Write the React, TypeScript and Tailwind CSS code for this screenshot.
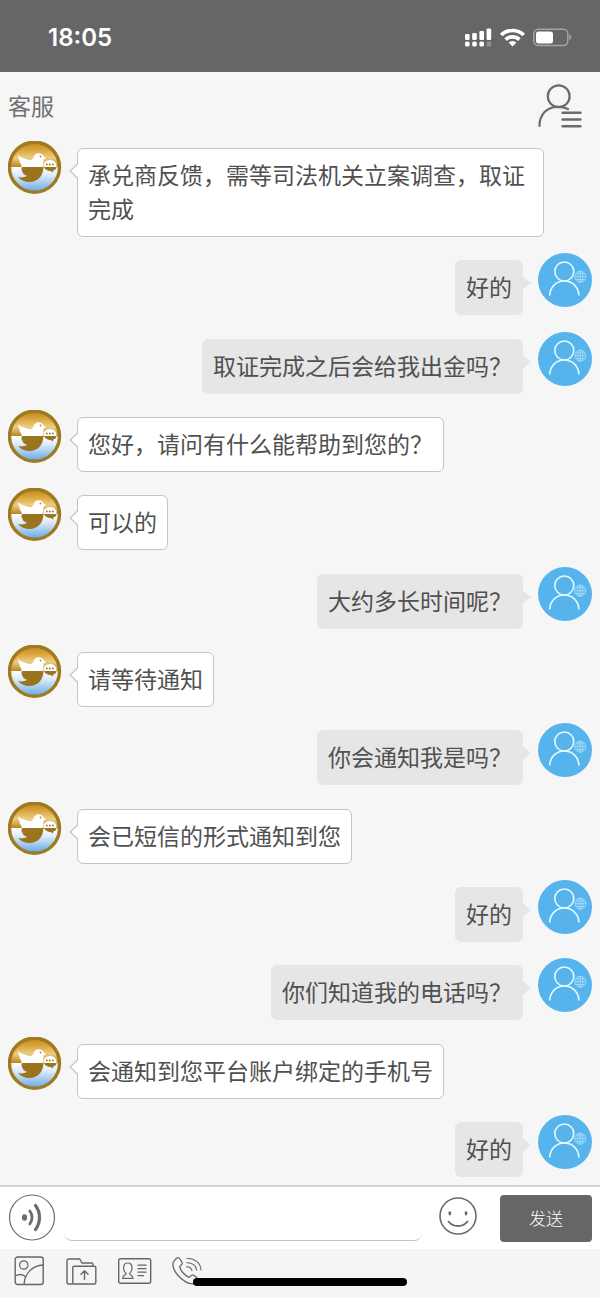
import { useState } from 'react'

type Message = { id: number; from: 'agent' | 'me'; text: string }

const messages: Message[] = [
  { id: 1, from: 'agent', text: '承兑商反馈，需等司法机关立案调查，取证完成' },
  { id: 2, from: 'me', text: '好的' },
  { id: 3, from: 'me', text: '取证完成之后会给我出金吗？' },
  { id: 4, from: 'agent', text: '您好，请问有什么能帮助到您的？' },
  { id: 5, from: 'agent', text: '可以的' },
  { id: 6, from: 'me', text: '大约多长时间呢？' },
  { id: 7, from: 'agent', text: '请等待通知' },
  { id: 8, from: 'me', text: '你会通知我是吗？' },
  { id: 9, from: 'agent', text: '会已短信的形式通知到您' },
  { id: 10, from: 'me', text: '好的' },
  { id: 11, from: 'me', text: '你们知道我的电话吗？' },
  { id: 12, from: 'agent', text: '会通知到您平台账户绑定的手机号' },
  { id: 13, from: 'me', text: '好的' },
]

function StatusBar() {
  return (
    <div className="flex h-[72px] items-center justify-between bg-[#666666] pt-1 pr-7 pl-12">
      <span className="font-[Inter] text-2xl font-semibold text-white">18:05</span>
      <svg width="108" height="20" viewBox="0 0 108 20" fill="#fff" aria-hidden="true">
        <rect x="1" y="6" width="4.6" height="6" rx="1.2" />
        <rect x="8.2" y="5" width="4.6" height="7" rx="1.2" />
        <rect x="15.4" y="3" width="4.6" height="9" rx="1.2" />
        <rect x="22.6" y="0.5" width="4.6" height="11.5" rx="1.2" />
        <rect x="1" y="13.5" width="4.6" height="5" rx="1.6" />
        <rect x="8.2" y="13.5" width="4.6" height="5" rx="1.6" />
        <rect x="15.4" y="13.5" width="4.6" height="5" rx="1.6" />
        <rect x="22.6" y="13.5" width="4.6" height="5" rx="1.6" fill="#909090" />
        <g fill="none" stroke="#fff" strokeWidth="3.6">
          <path d="M37.2 7a16.4 16.4 0 0 1 22.6 0" />
          <path d="M41.6 11.6a10 10 0 0 1 13.8 0" />
        </g>
        <path d="M48.5 18.6l-3.9-4a5.6 5.6 0 0 1 7.8 0z" />
        <rect x="69.8" y="1.2" width="34" height="16.4" rx="4.5" fill="none" stroke="#a3a3a3" strokeWidth="1.5" />
        <rect x="72" y="3.4" width="17" height="12" rx="2.6" />
        <path d="M105.4 6.6c2.4.8 2.4 4.8 0 5.6z" fill="#a3a3a3" />
      </svg>
    </div>
  )
}

function AgentAvatar() {
  return (
    <svg className="shrink-0" width="54" height="54" viewBox="0 0 54 54" role="img" aria-label="客服">
      <defs>
        <linearGradient id="gold" x1="0" y1="0" x2="0" y2="1">
          <stop offset="0" stopColor="#b8861c" />
          <stop offset="0.35" stopColor="#dba63a" />
          <stop offset="0.65" stopColor="#edcd86" />
          <stop offset="1" stopColor="#b9851c" />
        </linearGradient>
        <linearGradient id="water" x1="0" y1="0" x2="0" y2="1">
          <stop offset="0" stopColor="#ffffff" />
          <stop offset="0.3" stopColor="#dcebfa" />
          <stop offset="1" stopColor="#4d9be0" />
        </linearGradient>
        <clipPath id="disc">
          <circle cx="26.5" cy="26" r="25" />
        </clipPath>
      </defs>
      <g clipPath="url(#disc)">
        <rect width="54" height="26" fill="url(#gold)" />
        <rect y="26" width="54" height="28" fill="url(#water)" />
        {/* reflection of the bird */}
        <path
          d="M14 26h21.5c0 8.500-5.700 15-13.800 15-4.800 0-9-1.700-11.500-5 3.800.8 6.800.3 9-1.300-2.700-.6-4.400-2-4.700-4-1.200-.9-1.300-2.700-.5-4.700z"
          fill="#9b7420"
        />
        <path d="M35.8 26h13c-.5 2-2 3.300-3.800 3.600l.3 2-2.800-1.700c-3 0-6-1.500-6.700-3.900z" fill="#9b7420" />
        {/* bird */}
        <path
          d="M10.3 14.3c3.500 3.200 7.500 4.100 11.500 4.600 2 0 3.300-1 3.800-2.600.8-2.600 2.500-4 5-4 2.200 0 3.900 1 4.700 2.600l2.700 2.400-2.500 1.200c.3 3-.1 5.500-1 7.500H14.200c-.8-.8-1-1.700-.8-2.600-1.300-.8-1.900-2.100-1.700-3.700-1-1.600-1.500-3.400-1.400-5.400z"
          fill="#fff"
        />
        <circle cx="32.5" cy="15.5" r="0.9" fill="#b58322" />
        <path d="M35.5 26c-.7-4.200 2.500-7 6.500-7s7.200 2.800 6.500 7z" fill="#fff" />
        <g fill="#9b7420">
          <circle cx="38.8" cy="23.5" r="0.9" />
          <circle cx="41.8" cy="23.5" r="0.9" />
          <circle cx="44.8" cy="23.5" r="0.9" />
        </g>
      </g>
      <circle cx="26.5" cy="26.2" r="25" fill="none" stroke="#a07a20" strokeWidth="3.4" />
    </svg>
  )
}

function MyAvatar() {
  return (
    <svg className="shrink-0" width="54" height="54" viewBox="0 0 54 54" fill="none" role="img" aria-label="我">
      <circle cx="27" cy="27" r="27" fill="#57b3ec" />
      <g stroke="#e3fbff" strokeWidth="1.6" strokeLinecap="round">
        <circle cx="26.3" cy="18.5" r="9.5" />
        <path d="M11.7 42c.6-8.500 6.800-14 14.600-14s14 5.500 14.600 14" />
      </g>
      <g stroke="#a5dcf8" strokeWidth="0.9">
        <circle cx="42.3" cy="23.7" r="5.5" />
        <ellipse cx="42.3" cy="23.7" rx="2.6" ry="5.5" />
        <path d="M42.3 18.2v11M36.8 23.7h11M37.8 20.9h9M37.8 26.5h9" />
      </g>
    </svg>
  )
}

function ChatRow({ message }: { message: Message }) {
  if (message.from === 'me') {
    return (
      <li className="flex items-start justify-end gap-[15px] pl-16">
        <div className="relative mt-[7px] rounded-md border border-[#e6e6e6] bg-[#e6e6e6] px-[10px] pt-2 pb-[11px]">
          <p>{message.text}</p>
          <svg className="absolute top-[14px] -right-[9px]" width="9" height="16" viewBox="0 0 9 16" aria-hidden="true">
            <path d="M0 0.5L9 8L0 15.5z" fill="#e6e6e6" />
          </svg>
        </div>
        <MyAvatar />
      </li>
    )
  }
  return (
    <li className="flex items-start gap-[15px] pr-12">
      <AgentAvatar />
      <div className="relative mt-[7px] rounded-md border border-[#c4c4c4] bg-white px-[10px] pt-2 pb-[11px]">
        <p>{message.text}</p>
        <svg className="absolute top-[13px] -left-[9px]" width="10" height="18" viewBox="0 0 10 18" aria-hidden="true">
          <path d="M10 1L1.2 9L10 17z" fill="#fff" />
          <path d="M9 1.5L1.2 9L9 16.5" fill="none" stroke="#c4c4c4" strokeWidth="1.2" />
        </svg>
      </div>
    </li>
  )
}

function Composer() {
  const [draft, setDraft] = useState('')

  return (
    <form
      className="flex h-16 items-center border-t-2 border-[#d4d4d4] bg-white px-2"
      onSubmit={(e) => e.preventDefault()}
    >
      <button type="button" aria-label="语音" className="shrink-0">
        <svg width="48" height="48" viewBox="0 0 48 48" fill="none" stroke="#6b6b6b">
          <circle cx="24" cy="23.5" r="22.5" strokeWidth="1.2" />
          <ellipse cx="16.5" cy="23.5" rx="2.6" ry="3.3" fill="#6b6b6b" stroke="none" />
          <path d="M21.8 17c3 3.800 3 9.200 0 13" strokeWidth="2.8" strokeLinecap="round" />
          <path d="M27.5 11.5c5.300 7 5.300 17 0 24" strokeWidth="3.2" strokeLinecap="round" />
        </svg>
      </button>
      <input
        type="text"
        aria-label="输入消息"
        value={draft}
        onChange={(e) => setDraft(e.target.value)}
        className="ml-2 h-[46px] min-w-0 flex-1 rounded-lg border-b border-[#c4c4c4] bg-white px-3 outline-none"
      />
      <button type="button" aria-label="表情" className="mr-5 ml-4 shrink-0">
        <svg width="42" height="42" viewBox="0 0 42 42" fill="none" stroke="#6b6b6b" strokeLinecap="round">
          <circle cx="20" cy="19" r="18" strokeWidth="1.6" />
          <path d="M11.8 15.5v1.6M28 15.5v1.6" strokeWidth="2.6" />
          <path d="M10.5 24.5c4.500 6 14.500 6 19 0" strokeWidth="1.8" />
        </svg>
      </button>
      <button type="submit" className="h-[47px] w-[92px] shrink-0 rounded bg-[#666666] text-[17px] font-light text-white">
        发送
      </button>
    </form>
  )
}

function Toolbar() {
  return (
    <div className="relative flex h-[49px] items-start gap-5 bg-[#f5f5f5] px-[14px] pt-[7px]">
      <button type="button" aria-label="图片">
        <svg width="32" height="32" viewBox="0 0 32 32" fill="none" stroke="#666" strokeWidth="1.4">
          <rect x="1.2" y="1" width="28" height="27.5" rx="2.5" />
          <circle cx="9.8" cy="9" r="4.2" strokeWidth="1.2" />
          <path d="M1.2 20c4-2.200 8-1.700 10.500 1" />
          <path d="M10 28.5c.8-11.500 8.500-19 19.200-19.500" />
        </svg>
      </button>
      <button type="button" aria-label="文件">
        <svg width="32" height="32" viewBox="0 0 32 32" fill="none" stroke="#666" strokeWidth="1.4" strokeLinejoin="round">
          <path d="M7 28H2.5a1.5 1.5 0 0 1-1.5-1.5v-22A1.5 1.5 0 0 1 2.5 3h11.3l2.200 4h9.500A1.5 1.5 0 0 1 27 8.5V10" />
          <rect x="6.8" y="10.3" width="23" height="17.7" rx="1.5" />
          <path d="M18.5 23.5v-8.500M15 18.3l3.500-3.500 3.500 3.500" strokeLinecap="round" />
        </svg>
      </button>
      <button type="button" aria-label="名片">
        <svg width="34" height="32" viewBox="0 0 34 32" fill="none" stroke="#666" strokeWidth="1.4">
          <rect x="0.7" y="2.8" width="32" height="24.5" rx="2" />
          <path d="M8.2 17.5c-1.800-1.500-2.600-3.600-2.600-5.700 0-3 1.700-4.800 4.200-4.800s4.200 1.800 4.200 4.800c0 2.100-.8 4.200-2.600 5.700-.4 1.200 3.600 1.300 3.600 4.800H4.700c0-3.500 4-3.600 3.500-4.800z" strokeWidth="1.2" />
          <path d="M19.5 9.2h9M19.5 12.7h9M19.5 16.2h9M19.5 19.7h6.5" strokeWidth="1.3" />
        </svg>
      </button>
      <button type="button" aria-label="电话">
        <svg width="32" height="32" viewBox="0 0 32 32" fill="none" stroke="#666" strokeWidth="1.3" strokeLinejoin="round" strokeLinecap="round">
          <path d="M2.3 4.6C3.5 3 5 1.7 6.3 1.7c1 0 4 4.600 4 5.700 0 1.300-2.600 2.300-2.600 3.400 1 4.200 5.300 8.700 9.300 10.500 1.200 0 2.200-2.500 3.500-2.500 1.200 0 5.300 3.200 5.300 4.500-.8 2.300-3 4.600-5.500 4.600C12 27.5 1 16.5.8 8.3c0-1.500.7-2.700 1.500-3.700z" />
          <path d="M15 2.5c7.500-.5 13.500 4.500 14 11.500M14.700 6.7c5.500-.3 9.500 3 10 7.500M14.5 10.7c3 0 5 1.500 5.500 4" strokeWidth="1.1" />
        </svg>
      </button>
      {/* home indicator */}
      <div className="absolute inset-x-0 bottom-3 mx-auto h-2 w-[214px] rounded-full bg-black" />
    </div>
  )
}

export default function App() {
  return (
    <div className="flex min-h-screen flex-col bg-[#f6f6f6] font-['Noto_Sans_CJK_SC',sans-serif] text-[23px] leading-[34px] text-[#505050]">
      <StatusBar />
      <header className="flex h-[69px] items-start justify-between pt-[11px] pr-4 pl-2">
        <h1 className="pt-[5px] text-[#707070]">客服</h1>
        <button type="button" aria-label="用户菜单">
          <svg width="48" height="48" viewBox="0 0 48 48" fill="none" stroke="#6b6b6b" strokeWidth="2.2" strokeLinecap="round">
            <circle cx="22.7" cy="13.2" r="10.9" />
            <path d="M3.5 43C3.5 31.5 11 23.8 21.5 23.8c4 0 7.500.6 10.500 2.200" />
            <path d="M26.5 29.8h18M26.5 36.5h18M26.5 43.2h18" strokeWidth="2.4" />
          </svg>
        </button>
      </header>
      <ul className="flex flex-1 flex-col justify-between gap-3 px-2 pb-2">
        {messages.map((m) => (
          <ChatRow key={m.id} message={m} />
        ))}
      </ul>
      <Composer />
      <Toolbar />
    </div>
  )
}
